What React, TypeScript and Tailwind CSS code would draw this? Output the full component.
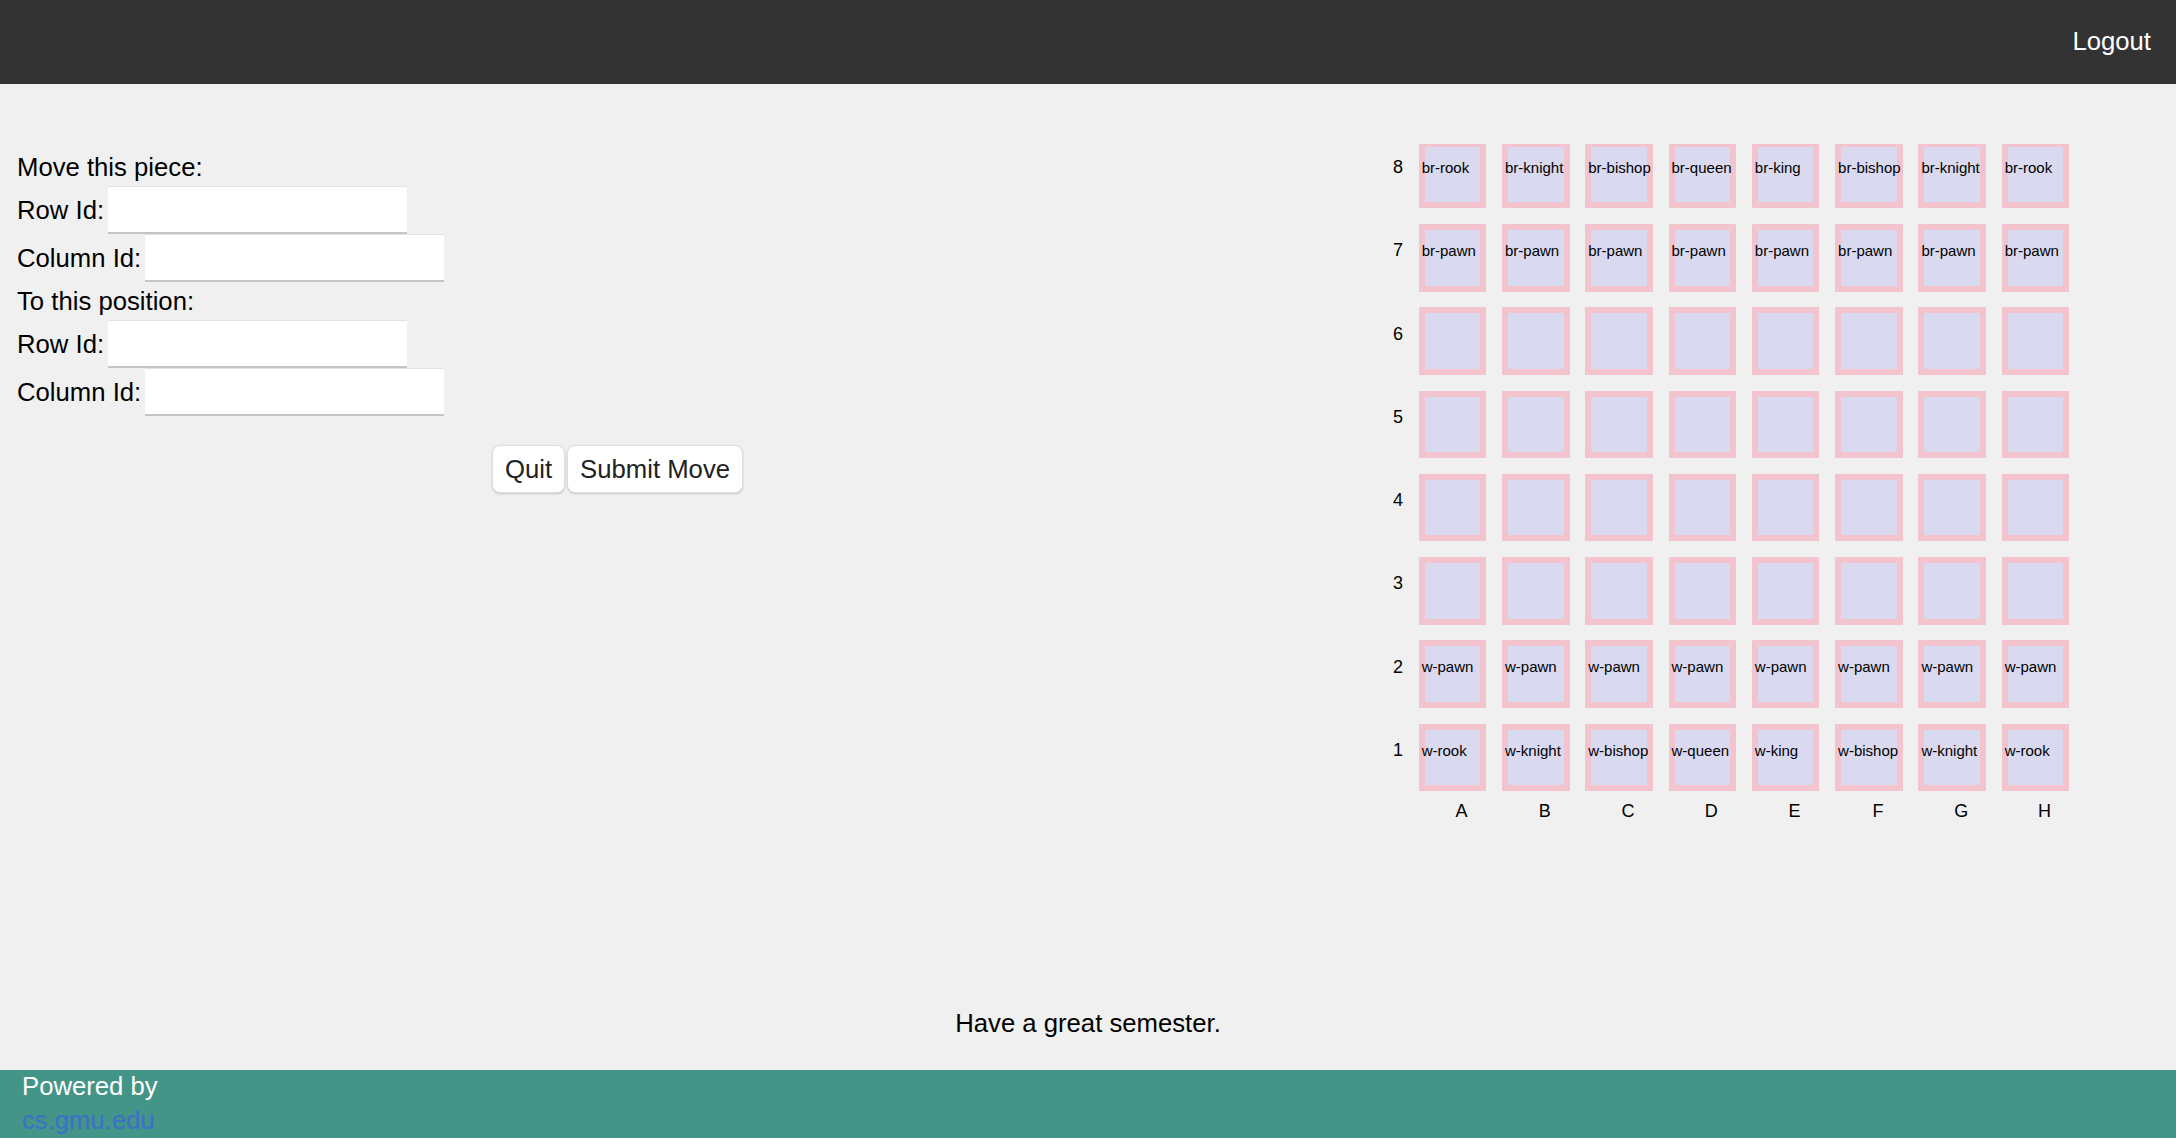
import React from "react";

const TOP_ROW = ["br-rook", "br-knight", "br-bishop", "br-queen", "br-king", "br-bishop", "br-knight", "br-rook"];
const BOTTOM_ROW = ["w-rook", "w-knight", "w-bishop", "w-queen", "w-king", "w-bishop", "w-knight", "w-rook"];
const COLS = ["A", "B", "C", "D", "E", "F", "G", "H"];

const board: { id: number; pieces: string[] }[] = [
  { id: 8, pieces: TOP_ROW },
  { id: 7, pieces: Array(8).fill("br-pawn") },
  { id: 6, pieces: Array(8).fill("") },
  { id: 5, pieces: Array(8).fill("") },
  { id: 4, pieces: Array(8).fill("") },
  { id: 3, pieces: Array(8).fill("") },
  { id: 2, pieces: Array(8).fill("w-pawn") },
  { id: 1, pieces: BOTTOM_ROW },
];

function Field({ label }: { label: string }) {
  return (
    <div className="flex items-center h-[48px]">
      <span>{label}</span>
      <input
        type="text"
        className="ml-[4px] w-[299px] h-[48px] bg-white border-t border-t-[#e2e2e2] border-b-2 border-b-[#c4c4c4] outline-none"
      />
    </div>
  );
}

function Cell({ piece, first }: { piece: string; first: boolean }) {
  return (
    <div
      className={
        first
          ? "w-[67.6px] h-[64.3px] bg-[#d9d9f0] border-[6.7px] border-t-[3.3px] border-[#f3c4cd]"
          : "w-[67.6px] h-[67.6px] bg-[#d9d9f0] border-[6.7px] border-[#f3c4cd]"
      }
    >
      <div className="-ml-[3px] pt-[12px] text-[15px] leading-[17.2px] whitespace-nowrap text-black">{piece}</div>
    </div>
  );
}

export default function App() {
  return (
    <div className="w-[2176px] font-['Liberation_Sans',Arial,Helvetica,sans-serif] text-[25.7px] text-black">
      <header className="h-[84px] bg-[#333333] flex items-center justify-end pr-[25px]">
        <a className="text-white leading-none cursor-pointer">Logout</a>
      </header>

      <main className="h-[986px] bg-[#f0f0f0] flex flex-col">
        <div className="flex items-start">
          <div className="w-[1235px] pt-[64px] pl-[17px] flex flex-col">
            <div className="h-[38px] flex items-center">Move this piece:</div>
            <Field label="Row Id:" />
            <Field label="Column Id:" />
            <div className="h-[38px] flex items-center">To this position:</div>
            <Field label="Row Id:" />
            <Field label="Column Id:" />
            <div className="mt-[29px] flex justify-center gap-[2px] -ml-[17px]">
              <button className="h-[48px] px-[12px] bg-white border border-[#dedede] rounded-[8px] shadow-[0_1px_2px_rgba(0,0,0,0.18)] text-[#222]">
                Quit
              </button>
              <button className="h-[48px] px-[12px] bg-white border border-[#dedede] rounded-[8px] shadow-[0_1px_2px_rgba(0,0,0,0.18)] text-[#222]">
                Submit Move
              </button>
            </div>
          </div>

          <div className="ml-[158px] pt-[60px]">
            <div className="grid grid-cols-[10px_repeat(8,67.6px)] gap-[15.7px]">
              {board.map((row, ri) => (
                <React.Fragment key={row.id}>
                  <div className={ri === 0 ? "pt-[13px] text-[18px] leading-[20.7px]" : "pt-[16.3px] text-[18px] leading-[20.7px]"}>
                    {row.id}
                  </div>
                  {row.pieces.map((p, ci) => (
                    <Cell key={ci} piece={p} first={ri === 0} />
                  ))}
                </React.Fragment>
              ))}
            </div>
            <div className="mt-[10px] grid grid-cols-[10px_repeat(8,67.6px)] gap-x-[15.7px]">
              <div />
              {COLS.map((c) => (
                <div key={c} className="pl-[18px] text-center text-[18px] leading-[20.7px]">
                  {c}
                </div>
              ))}
            </div>
          </div>
        </div>

        <div className="mt-auto mb-[32px] text-center leading-[29.5px]">Have a great semester.</div>
      </main>

      <footer className="h-[68px] bg-[#439588] pl-[22px] leading-[33.6px]">
        <div className="text-white">Powered by</div>
        <a className="block text-[#3d6fca]">cs.gmu.edu</a>
      </footer>
    </div>
  );
}
